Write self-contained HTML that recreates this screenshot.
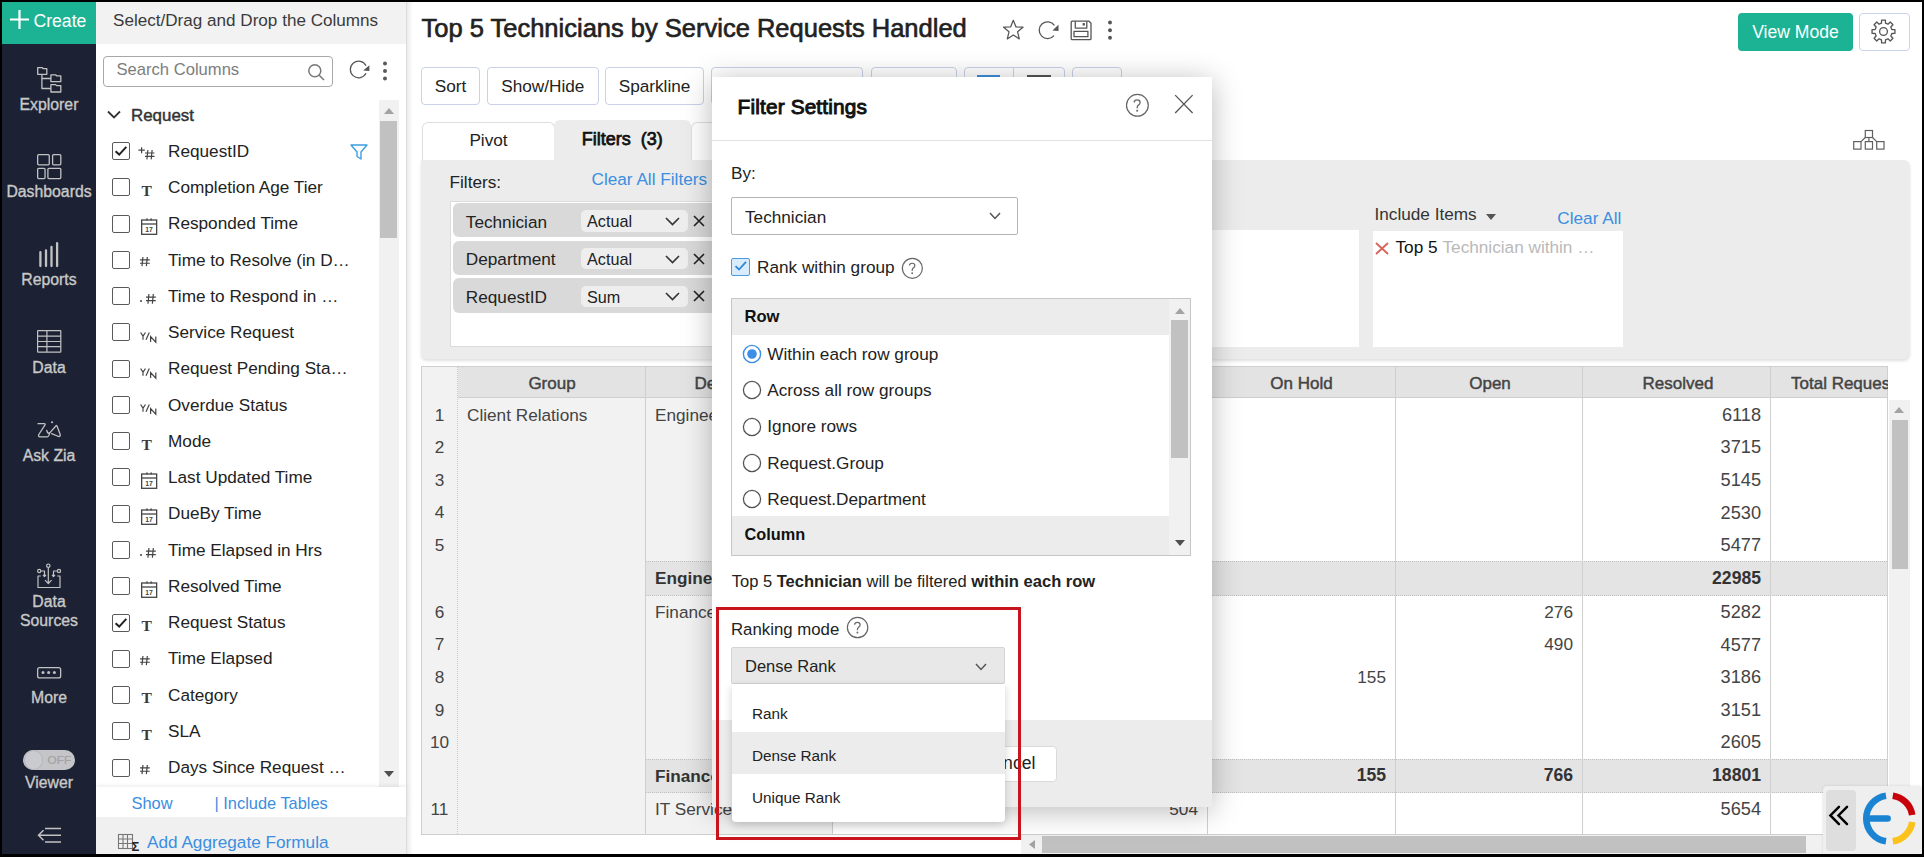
<!DOCTYPE html>
<html><head><meta charset="utf-8"><title>Filter Settings</title>
<style>
html,body{margin:0;padding:0;width:1924px;height:857px;overflow:hidden;background:#000;}
body{position:relative;font-family:'Liberation Sans', sans-serif;}
.t{position:absolute;line-height:1;white-space:nowrap;}
.r{position:absolute;box-sizing:border-box;}
svg.r{overflow:visible;}
</style></head><body>
<div class="r" style="left:2.0px;top:2.0px;width:1920.0px;height:852.0px;background:#fff;"></div>
<div class="r" style="left:2.0px;top:2.0px;width:94.0px;height:852.0px;background:#1c2133;"></div>
<div class="r" style="left:2.0px;top:2.0px;width:94.0px;height:42.0px;background:#1bb394;"></div>
<svg class="r" style="left:10px;top:10px;" width="19" height="19" viewBox="0 0 19 19"><path d="M9.5 0V19M0 9.5H19" stroke="#fff" stroke-width="2.2"/></svg>
<div class="t" style="left:33.5px;top:13.1px;font-size:17.6px;color:#fff;font-weight:400;">Create</div>
<svg class="r" style="left:37px;top:67px;" width="25" height="26" viewBox="0 0 25 26"><g fill="none" stroke="#c2c2c2" stroke-width="1.3" stroke-linejoin="round"><path d="M0.7 7.3V0.7H5.3L6.3 1.7H9.8V7.3Z"/><path d="M13.9 14.7V7.8H18.6L19.6 8.8H23.8V14.7Z"/><path d="M13.9 25V17.6H18.6L19.6 18.6H23.8V25Z"/><path d="M4.9 7.3V21.5H13.9M4.9 11.5H13.9"/></g></svg>
<div class="t" style="left:-251.0px;width:600px;text-align:center;top:96.6px;font-size:15.8px;color:#c9c9c9;font-weight:400;-webkit-text-stroke:0.35px #c9c9c9;">Explorer</div>
<svg class="r" style="left:37px;top:154px;" width="25" height="25" viewBox="0 0 25 25"><g fill="none" stroke="#c2c2c2" stroke-width="1.3"><rect x="0.65" y="0.65" width="11.6" height="10.2" rx="1"/><rect x="15.6" y="0.65" width="8.2" height="10.2" rx="1"/><rect x="0.65" y="14.3" width="7.4" height="10.3" rx="1"/><rect x="10.9" y="14.3" width="12.9" height="10.3" rx="1"/></g></svg>
<div class="t" style="left:-251.0px;width:600px;text-align:center;top:183.6px;font-size:15.8px;color:#c9c9c9;font-weight:400;-webkit-text-stroke:0.35px #c9c9c9;">Dashboards</div>
<svg class="r" style="left:37px;top:240px;" width="24" height="28" viewBox="0 0 24 28"><g stroke="#c2c2c2" stroke-width="2.3" stroke-linecap="round"><path d="M3.4 12.2V26M9 10.4V26M14.5 6.8V26M20.1 3.1V26"/></g></svg>
<div class="t" style="left:-251.0px;width:600px;text-align:center;top:272.1px;font-size:15.8px;color:#c9c9c9;font-weight:400;-webkit-text-stroke:0.35px #c9c9c9;">Reports</div>
<svg class="r" style="left:37px;top:330px;" width="25" height="23" viewBox="0 0 25 23"><g fill="none" stroke="#c2c2c2" stroke-width="1.2"><rect x="0.6" y="0.6" width="23.2" height="21.6" rx="0.5"/><path d="M0.6 6.1H23.8M0.6 11.5H23.8M0.6 16.6H23.8M9.9 0.6V22.2"/></g></svg>
<div class="t" style="left:-251.0px;width:600px;text-align:center;top:359.6px;font-size:15.8px;color:#c9c9c9;font-weight:400;-webkit-text-stroke:0.35px #c9c9c9;">Data</div>
<svg class="r" style="left:37px;top:421px;" width="25" height="18" viewBox="0 0 25 18"><g fill="none" stroke="#c2c2c2" stroke-width="1.3" stroke-linecap="round" stroke-linejoin="round"><path d="M1 2.7H7.3Q8.6 2.7 8 3.9L1.8 13.5Q1 15.5 2.6 15.8H10.3Q11.4 15.8 11.9 14.4L12.6 11.9"/><path d="M9.75 9.4Q10.3 12.5 12.3 12.4L19.1 4.7Q19.6 4.2 20 5L23.2 13.5Q23.6 15.6 21.6 15.5L14.6 12.7"/></g><circle cx="15.06" cy="1.26" r="1.1" fill="#c2c2c2"/></svg>
<div class="t" style="left:-251.0px;width:600px;text-align:center;top:447.6px;font-size:15.8px;color:#c9c9c9;font-weight:400;-webkit-text-stroke:0.35px #c9c9c9;">Ask Zia</div>
<svg class="r" style="left:37px;top:563px;" width="25" height="26" viewBox="0 0 25 26"><g fill="none" stroke="#c2c2c2" stroke-width="1.2" stroke-linejoin="round"><path d="M3.8 13H1V24.5H23V13H20.2"/><circle cx="11.3" cy="2.7" r="1.7"/><path d="M11.3 4.4V20.5M8 17.2L11.3 20.5L14.6 17.2"/><circle cx="2.2" cy="8" r="1.6"/><path d="M3.8 8H7.5V13.3M6 11.8L7.5 13.5L9 11.8"/><circle cx="22" cy="8" r="1.6"/><path d="M20.4 8H16.5V13.3M15 11.8L16.5 13.5L18 11.8"/></g></svg>
<div class="t" style="left:-251.0px;width:600px;text-align:center;top:593.8px;font-size:15.8px;color:#c9c9c9;font-weight:400;-webkit-text-stroke:0.35px #c9c9c9;">Data</div>
<div class="t" style="left:-251.0px;width:600px;text-align:center;top:612.8px;font-size:15.8px;color:#c9c9c9;font-weight:400;-webkit-text-stroke:0.35px #c9c9c9;">Sources</div>
<svg class="r" style="left:37px;top:667px;" width="25" height="12" viewBox="0 0 25 12"><g fill="none" stroke="#c2c2c2" stroke-width="1.3"><rect x="0.65" y="0.65" width="23" height="10.3" rx="2"/></g><g fill="#c2c2c2"><circle cx="6" cy="5.5" r="1.5"/><circle cx="11.6" cy="5.5" r="1.5"/><circle cx="17.4" cy="5.5" r="1.5"/></g></svg>
<div class="t" style="left:-251.0px;width:600px;text-align:center;top:690.1px;font-size:15.8px;color:#c9c9c9;font-weight:400;-webkit-text-stroke:0.35px #c9c9c9;">More</div>
<div class="r" style="left:23.0px;top:750.0px;width:52.0px;height:20.0px;background:#c5c5c9;border-radius:10px;"></div>
<div class="r" style="left:23.5px;top:750.3px;width:19.0px;height:19.4px;background:#cacbd0;border-radius:50%;border:1px solid #b8b8bc;"></div>
<div class="t" style="left:47.5px;top:755.0px;font-size:11.8px;color:#a2a2a2;font-weight:400;-webkit-text-stroke:0.2px #a2a2a2;">OFF</div>
<div class="t" style="left:-251.0px;width:600px;text-align:center;top:774.6px;font-size:15.8px;color:#c9c9c9;font-weight:400;-webkit-text-stroke:0.35px #c9c9c9;">Viewer</div>
<svg class="r" style="left:37px;top:827px;" width="25" height="17" viewBox="0 0 25 17"><g fill="none" stroke="#c2c2c2" stroke-width="1.5"><path d="M8 1.5H24M1.5 8.2H24M8 15H24M6.5 3.2L1.5 8.2L6.5 13.2"/></g></svg>
<div class="r" style="left:96.0px;top:2.0px;width:311.0px;height:42.0px;background:#f2f2f2;"></div>
<div class="t" style="left:113.0px;top:11.7px;font-size:17.1px;color:#3a3a3a;font-weight:400;">Select/Drag and Drop the Columns</div>
<div class="r" style="left:103.0px;top:56.0px;width:230.0px;height:31.0px;border:1px solid #a8a8a8;border-radius:4px;background:#fff;"></div>
<div class="t" style="left:116.5px;top:61.9px;font-size:16.6px;color:#7d7d7d;font-weight:400;">Search Columns</div>
<svg class="r" style="left:308px;top:64px;" width="17" height="17" viewBox="0 0 17 17"><g fill="none" stroke="#777" stroke-width="1.5"><circle cx="6.8" cy="6.8" r="6"/><path d="M11.2 11.2L16 16"/></g></svg>
<svg class="r" style="left:349px;top:61px;" width="22" height="20" viewBox="0 0 22 20"><path d="M17 4.6A8.3 8.3 0 1 0 17 12.3" fill="none" stroke="#555" stroke-width="1.25"/><path d="M20.4 4.3V10L14.2 9.5Z" fill="#555"/></svg>
<svg class="r" style="left:381px;top:59px;" width="8" height="24" viewBox="0 0 8 24"><g fill="#5a5a5a"><circle cx="4" cy="4.4" r="2"/><circle cx="4" cy="12" r="2"/><circle cx="4" cy="19.5" r="2"/></g></svg>
<svg class="r" style="left:107px;top:110px;" width="14" height="10" viewBox="0 0 14 10"><path d="M1 1.5L7 7.5L13 1.5" fill="none" stroke="#333" stroke-width="1.8"/></svg>
<div class="t" style="left:131.0px;top:108.2px;font-size:16.9px;color:#333;font-weight:400;-webkit-text-stroke:0.45px #333;">Request</div>
<div class="r" style="left:378.5px;top:100.0px;width:20.0px;height:686.5px;background:#f1f1f1;"></div>
<svg class="r" style="left:384px;top:108px;" width="10" height="6" viewBox="0 0 10 6"><path d="M0 6L5 0L10 6Z" fill="#a3a3a3"/></svg>
<div class="r" style="left:380.0px;top:121.0px;width:17.0px;height:117.0px;background:#c1c1c1;"></div>
<svg class="r" style="left:384px;top:771px;" width="10" height="6" viewBox="0 0 10 6"><path d="M0 0L5 6L10 0Z" fill="#505050"/></svg>
<div class="r" style="left:112.0px;top:142.2px;width:18.0px;height:18.0px;border:1.3px solid #5a5a5a;border-radius:2px;background:#fff;"></div>
<svg class="r" style="left:114px;top:145.2px;" width="14" height="12" viewBox="0 0 14 12"><path d="M1.6 6.2L5.2 9.6L12.3 1.8" fill="none" stroke="#222" stroke-width="2"/></svg>
<svg class="r" style="left:138px;top:146.7px;" width="8" height="8" viewBox="0 0 8 8"><path d="M0.4 3.2H6.8M3.6 0.2V6.2" fill="none" stroke="#444" stroke-width="1.2"/></svg>
<svg class="r" style="left:144.8px;top:150.2px;" width="9.5" height="9.4" viewBox="0 0 9.5 9.4"><path d="M2.85 0L1.90 9.4M7.12 0L6.17 9.4M0 3.01H9.5M0 6.39H9.5" fill="none" stroke="#444" stroke-width="1.2"/></svg>
<div class="t" style="left:168.0px;top:142.8px;font-size:17.2px;color:#222;font-weight:400;">RequestID</div>
<div class="r" style="left:112.0px;top:178.4px;width:18.0px;height:18.0px;border:1.3px solid #5a5a5a;border-radius:2px;background:#fff;"></div>
<div class="t" style="left:141.4px;top:182.9px;font-size:15.5px;color:#3a3a3a;font-weight:700;font-family:'Liberation Serif';">T</div>
<div class="t" style="left:168.0px;top:179.1px;font-size:17.2px;color:#222;font-weight:400;">Completion Age Tier</div>
<div class="r" style="left:112.0px;top:214.7px;width:18.0px;height:18.0px;border:1.3px solid #5a5a5a;border-radius:2px;background:#fff;"></div>
<svg class="r" style="left:141px;top:218.2px;" width="16" height="17" viewBox="0 0 16 17"><g fill="none" stroke="#444" stroke-width="1.3"><rect x="0.65" y="2" width="15" height="14.3"/><path d="M0.65 6H15.65"/></g><rect x="5.3" y="0.4" width="1.3" height="2" fill="#444"/><rect x="9.5" y="0.4" width="1.3" height="2" fill="#444"/><text x="8" y="13.7" font-size="6.8" font-weight="700" text-anchor="middle" fill="#444" font-family="Liberation Sans">17</text></svg>
<div class="t" style="left:168.0px;top:215.3px;font-size:17.2px;color:#222;font-weight:400;">Responded Time</div>
<div class="r" style="left:112.0px;top:250.9px;width:18.0px;height:18.0px;border:1.3px solid #5a5a5a;border-radius:2px;background:#fff;"></div>
<svg class="r" style="left:139.8px;top:256.9px;" width="9.8" height="9.2" viewBox="0 0 9.8 9.2"><path d="M2.94 0L1.96 9.2M7.35 0L6.37 9.2M0 2.94H9.8M0 6.26H9.8" fill="none" stroke="#444" stroke-width="1.2"/></svg>
<div class="t" style="left:168.0px;top:251.6px;font-size:17.2px;color:#222;font-weight:400;">Time to Resolve (in D…</div>
<div class="r" style="left:112.0px;top:287.2px;width:18.0px;height:18.0px;border:1.3px solid #5a5a5a;border-radius:2px;background:#fff;"></div>
<div class="r" style="left:140px;top:300.2px;width:2px;height:2px;background:#444;border-radius:50%;"></div>
<svg class="r" style="left:145.5px;top:294.0px;" width="9.8" height="9.7" viewBox="0 0 9.8 9.7"><path d="M2.94 0L1.96 9.7M7.35 0L6.37 9.7M0 3.10H9.8M0 6.60H9.8" fill="none" stroke="#444" stroke-width="1.2"/></svg>
<div class="t" style="left:168.0px;top:287.8px;font-size:17.2px;color:#222;font-weight:400;">Time to Respond in …</div>
<div class="r" style="left:112.0px;top:323.4px;width:18.0px;height:18.0px;border:1.3px solid #5a5a5a;border-radius:2px;background:#fff;"></div>
<svg class="r" style="left:140px;top:331.9px;" width="17" height="11" viewBox="0 0 17 11"><path d="M0.6 0.5L3 4.1L5.5 0.5M3 4.1V7.8M6 7.8L9.3 0.5M10.6 10.1V4.5L15.8 10.1V4.5" fill="none" stroke="#444" stroke-width="1.2"/></svg>
<div class="t" style="left:168.0px;top:324.1px;font-size:17.2px;color:#222;font-weight:400;">Service Request</div>
<div class="r" style="left:112.0px;top:359.7px;width:18.0px;height:18.0px;border:1.3px solid #5a5a5a;border-radius:2px;background:#fff;"></div>
<svg class="r" style="left:140px;top:368.2px;" width="17" height="11" viewBox="0 0 17 11"><path d="M0.6 0.5L3 4.1L5.5 0.5M3 4.1V7.8M6 7.8L9.3 0.5M10.6 10.1V4.5L15.8 10.1V4.5" fill="none" stroke="#444" stroke-width="1.2"/></svg>
<div class="t" style="left:168.0px;top:360.3px;font-size:17.2px;color:#222;font-weight:400;">Request Pending Sta…</div>
<div class="r" style="left:112.0px;top:395.9px;width:18.0px;height:18.0px;border:1.3px solid #5a5a5a;border-radius:2px;background:#fff;"></div>
<svg class="r" style="left:140px;top:404.4px;" width="17" height="11" viewBox="0 0 17 11"><path d="M0.6 0.5L3 4.1L5.5 0.5M3 4.1V7.8M6 7.8L9.3 0.5M10.6 10.1V4.5L15.8 10.1V4.5" fill="none" stroke="#444" stroke-width="1.2"/></svg>
<div class="t" style="left:168.0px;top:396.6px;font-size:17.2px;color:#222;font-weight:400;">Overdue Status</div>
<div class="r" style="left:112.0px;top:432.2px;width:18.0px;height:18.0px;border:1.3px solid #5a5a5a;border-radius:2px;background:#fff;"></div>
<div class="t" style="left:141.4px;top:436.7px;font-size:15.5px;color:#3a3a3a;font-weight:700;font-family:'Liberation Serif';">T</div>
<div class="t" style="left:168.0px;top:432.8px;font-size:17.2px;color:#222;font-weight:400;">Mode</div>
<div class="r" style="left:112.0px;top:468.4px;width:18.0px;height:18.0px;border:1.3px solid #5a5a5a;border-radius:2px;background:#fff;"></div>
<svg class="r" style="left:141px;top:471.9px;" width="16" height="17" viewBox="0 0 16 17"><g fill="none" stroke="#444" stroke-width="1.3"><rect x="0.65" y="2" width="15" height="14.3"/><path d="M0.65 6H15.65"/></g><rect x="5.3" y="0.4" width="1.3" height="2" fill="#444"/><rect x="9.5" y="0.4" width="1.3" height="2" fill="#444"/><text x="8" y="13.7" font-size="6.8" font-weight="700" text-anchor="middle" fill="#444" font-family="Liberation Sans">17</text></svg>
<div class="t" style="left:168.0px;top:469.1px;font-size:17.2px;color:#222;font-weight:400;">Last Updated Time</div>
<div class="r" style="left:112.0px;top:504.7px;width:18.0px;height:18.0px;border:1.3px solid #5a5a5a;border-radius:2px;background:#fff;"></div>
<svg class="r" style="left:141px;top:508.2px;" width="16" height="17" viewBox="0 0 16 17"><g fill="none" stroke="#444" stroke-width="1.3"><rect x="0.65" y="2" width="15" height="14.3"/><path d="M0.65 6H15.65"/></g><rect x="5.3" y="0.4" width="1.3" height="2" fill="#444"/><rect x="9.5" y="0.4" width="1.3" height="2" fill="#444"/><text x="8" y="13.7" font-size="6.8" font-weight="700" text-anchor="middle" fill="#444" font-family="Liberation Sans">17</text></svg>
<div class="t" style="left:168.0px;top:505.3px;font-size:17.2px;color:#222;font-weight:400;">DueBy Time</div>
<div class="r" style="left:112.0px;top:541.0px;width:18.0px;height:18.0px;border:1.3px solid #5a5a5a;border-radius:2px;background:#fff;"></div>
<div class="r" style="left:140px;top:554.0px;width:2px;height:2px;background:#444;border-radius:50%;"></div>
<svg class="r" style="left:145.5px;top:547.8px;" width="9.8" height="9.7" viewBox="0 0 9.8 9.7"><path d="M2.94 0L1.96 9.7M7.35 0L6.37 9.7M0 3.10H9.8M0 6.60H9.8" fill="none" stroke="#444" stroke-width="1.2"/></svg>
<div class="t" style="left:168.0px;top:541.6px;font-size:17.2px;color:#222;font-weight:400;">Time Elapsed in Hrs</div>
<div class="r" style="left:112.0px;top:577.2px;width:18.0px;height:18.0px;border:1.3px solid #5a5a5a;border-radius:2px;background:#fff;"></div>
<svg class="r" style="left:141px;top:580.7px;" width="16" height="17" viewBox="0 0 16 17"><g fill="none" stroke="#444" stroke-width="1.3"><rect x="0.65" y="2" width="15" height="14.3"/><path d="M0.65 6H15.65"/></g><rect x="5.3" y="0.4" width="1.3" height="2" fill="#444"/><rect x="9.5" y="0.4" width="1.3" height="2" fill="#444"/><text x="8" y="13.7" font-size="6.8" font-weight="700" text-anchor="middle" fill="#444" font-family="Liberation Sans">17</text></svg>
<div class="t" style="left:168.0px;top:577.8px;font-size:17.2px;color:#222;font-weight:400;">Resolved Time</div>
<div class="r" style="left:112.0px;top:613.5px;width:18.0px;height:18.0px;border:1.3px solid #5a5a5a;border-radius:2px;background:#fff;"></div>
<svg class="r" style="left:114px;top:616.5px;" width="14" height="12" viewBox="0 0 14 12"><path d="M1.6 6.2L5.2 9.6L12.3 1.8" fill="none" stroke="#222" stroke-width="2"/></svg>
<div class="t" style="left:141.4px;top:617.9px;font-size:15.5px;color:#3a3a3a;font-weight:700;font-family:'Liberation Serif';">T</div>
<div class="t" style="left:168.0px;top:614.1px;font-size:17.2px;color:#222;font-weight:400;">Request Status</div>
<div class="r" style="left:112.0px;top:649.7px;width:18.0px;height:18.0px;border:1.3px solid #5a5a5a;border-radius:2px;background:#fff;"></div>
<svg class="r" style="left:139.8px;top:655.7px;" width="9.8" height="9.2" viewBox="0 0 9.8 9.2"><path d="M2.94 0L1.96 9.2M7.35 0L6.37 9.2M0 2.94H9.8M0 6.26H9.8" fill="none" stroke="#444" stroke-width="1.2"/></svg>
<div class="t" style="left:168.0px;top:650.3px;font-size:17.2px;color:#222;font-weight:400;">Time Elapsed</div>
<div class="r" style="left:112.0px;top:686.0px;width:18.0px;height:18.0px;border:1.3px solid #5a5a5a;border-radius:2px;background:#fff;"></div>
<div class="t" style="left:141.4px;top:690.4px;font-size:15.5px;color:#3a3a3a;font-weight:700;font-family:'Liberation Serif';">T</div>
<div class="t" style="left:168.0px;top:686.6px;font-size:17.2px;color:#222;font-weight:400;">Category</div>
<div class="r" style="left:112.0px;top:722.2px;width:18.0px;height:18.0px;border:1.3px solid #5a5a5a;border-radius:2px;background:#fff;"></div>
<div class="t" style="left:141.4px;top:726.7px;font-size:15.5px;color:#3a3a3a;font-weight:700;font-family:'Liberation Serif';">T</div>
<div class="t" style="left:168.0px;top:722.8px;font-size:17.2px;color:#222;font-weight:400;">SLA</div>
<div class="r" style="left:112.0px;top:758.5px;width:18.0px;height:18.0px;border:1.3px solid #5a5a5a;border-radius:2px;background:#fff;"></div>
<svg class="r" style="left:139.8px;top:764.5px;" width="9.8" height="9.2" viewBox="0 0 9.8 9.2"><path d="M2.94 0L1.96 9.2M7.35 0L6.37 9.2M0 2.94H9.8M0 6.26H9.8" fill="none" stroke="#444" stroke-width="1.2"/></svg>
<div class="t" style="left:168.0px;top:759.1px;font-size:17.2px;color:#222;font-weight:400;">Days Since Request …</div>
<svg class="r" style="left:350px;top:144px;" width="18" height="16" viewBox="0 0 18 16"><path d="M1 1H17L11 8V15L7 12.5V8Z" fill="none" stroke="#3d9ee0" stroke-width="1.4" stroke-linejoin="round"/></svg>
<div class="r" style="left:96.0px;top:786.5px;width:311.0px;height:30.5px;background:#fff;box-shadow:0 -2px 3px rgba(0,0,0,0.06);"></div>
<div class="t" style="left:131.5px;top:795.1px;font-size:16.4px;color:#3b8ee0;font-weight:400;">Show</div>
<div class="t" style="left:214.5px;top:795.1px;font-size:16.4px;color:#3b8ee0;font-weight:400;">| Include Tables</div>
<div class="r" style="left:96.0px;top:817.0px;width:311.0px;height:37.0px;background:#f0f0f0;"></div>
<svg class="r" style="left:118px;top:834px;" width="24" height="18" viewBox="0 0 24 18"><g fill="none" stroke="#777" stroke-width="1.1"><rect x="0.5" y="0.5" width="14" height="14"/><path d="M0.5 5H14.5M0.5 9.5H14.5M5 0.5V14.5M9.5 0.5V14.5"/></g><text x="17.5" y="17" font-size="13" font-weight="700" fill="#222" text-anchor="middle" font-family="Liberation Sans">&#931;</text></svg>
<div class="t" style="left:147.0px;top:834.4px;font-size:17.2px;color:#3b8ee0;font-weight:400;">Add Aggregate Formula</div>
<div class="r" style="left:406.0px;top:2.0px;width:1.0px;height:852.0px;background:#dcdcdc;"></div>
<div class="r" style="left:407.0px;top:2.0px;width:6.0px;height:852.0px;background:linear-gradient(to right, rgba(0,0,0,0.08), rgba(0,0,0,0));"></div>
<div class="t" style="left:421.5px;top:16.0px;font-size:25.5px;color:#222;font-weight:400;-webkit-text-stroke:0.65px #222;">Top 5 Technicians by Service Requests Handled</div>
<svg class="r" style="left:1002px;top:19px;" width="23" height="22" viewBox="0 0 23 22"><path d="M11.3 1.3L14 7.9L21 8.2L15.6 12.8L17.3 19.9L11.3 16L5.3 19.9L7 12.8L1.6 8.2L8.6 7.9Z" fill="none" stroke="#555" stroke-width="1.25" stroke-linejoin="round"/></svg>
<svg class="r" style="left:1038px;top:20px;" width="22" height="21" viewBox="0 0 22 21"><path d="M16.48 5.38A8.4 8.4 0 1 0 16.03 15.6" fill="none" stroke="#555" stroke-width="1.3"/><path d="M20.5 4.8V10.9L14.4 10.6Z" fill="#555"/></svg>
<svg class="r" style="left:1070px;top:20px;" width="22" height="21" viewBox="0 0 22 21"><g fill="none" stroke="#555" stroke-width="1.3" stroke-linejoin="round"><path d="M2.2 1.2H19L21 3.2V18.7Q21 19.7 20 19.7H2.2Q1.2 19.7 1.2 18.7V2.2Q1.2 1.2 2.2 1.2Z"/><path d="M5.3 1.2V8.1H16.8V1.2"/><rect x="4" y="11.3" width="13.9" height="5.4"/></g><rect x="12.6" y="3.1" width="2.3" height="2.4" fill="#555"/></svg>
<svg class="r" style="left:1106px;top:18px;" width="8" height="24" viewBox="0 0 8 24"><g fill="#555"><circle cx="4" cy="4.5" r="1.95"/><circle cx="4" cy="12.2" r="1.95"/><circle cx="4" cy="19.8" r="1.95"/></g></svg>
<div class="r" style="left:1738.0px;top:13.0px;width:115.0px;height:38.0px;background:#1bb394;border-radius:4px;"></div>
<div class="t" style="left:1495.5px;width:600px;text-align:center;top:23.6px;font-size:17.6px;color:#fff;font-weight:400;">View Mode</div>
<div class="r" style="left:1859.0px;top:13.0px;width:51.0px;height:38.0px;border:1px solid #c8d2ea;border-radius:4px;background:#fff;"></div>
<svg class="r" style="left:1871.4px;top:19px;" width="25" height="25" viewBox="0 0 25 25"><g fill="none" stroke="#555" stroke-width="1.3" stroke-linejoin="round"><path d="M10.49 4.14L10.59 1.06L14.41 1.06L14.51 4.14L16.99 5.17L19.24 3.06L21.94 5.76L19.83 8.01L20.86 10.49L23.94 10.59L23.94 14.41L20.86 14.51L19.83 16.99L21.94 19.24L19.24 21.94L16.99 19.83L14.51 20.86L14.41 23.94L10.59 23.94L10.49 20.86L8.01 19.83L5.76 21.94L3.06 19.24L5.17 16.99L4.14 14.51L1.06 14.41L1.06 10.59L4.14 10.49L5.17 8.01L3.06 5.76L5.76 3.06L8.01 5.17Z"/><circle cx="12.5" cy="12.5" r="3.9"/></g></svg>
<div class="r" style="left:421.0px;top:67.0px;width:59.0px;height:38.3px;border:1px solid #c8d2e8;border-radius:4px;background:#fff;"></div>
<div class="t" style="left:150.5px;width:600px;text-align:center;top:78.4px;font-size:17.2px;color:#222;font-weight:400;">Sort</div>
<div class="r" style="left:487.0px;top:67.0px;width:111.5px;height:38.3px;border:1px solid #c8d2e8;border-radius:4px;background:#fff;"></div>
<div class="t" style="left:242.8px;width:600px;text-align:center;top:78.4px;font-size:17.2px;color:#222;font-weight:400;">Show/Hide</div>
<div class="r" style="left:605.0px;top:67.0px;width:99.0px;height:38.3px;border:1px solid #c8d2e8;border-radius:4px;background:#fff;"></div>
<div class="t" style="left:354.5px;width:600px;text-align:center;top:78.4px;font-size:17.2px;color:#222;font-weight:400;">Sparkline</div>
<div class="r" style="left:710.5px;top:67.0px;width:152.0px;height:38.3px;border:1px solid #c8d2e8;border-radius:4px;background:#fff;"></div>
<div class="r" style="left:870.5px;top:67.0px;width:86.5px;height:38.3px;border:1px solid #c8d2e8;border-radius:4px;background:#fff;"></div>
<div class="r" style="left:963.5px;top:67.0px;width:101.0px;height:38.3px;border:1px solid #c8d2e8;border-radius:4px;background:#fff;"></div>
<div class="r" style="left:1071.5px;top:67.0px;width:50.5px;height:38.3px;border:1px solid #c8d2e8;border-radius:4px;background:#fff;"></div>
<div class="r" style="left:1013.0px;top:67.0px;width:1.0px;height:38.3px;background:#c8d2e8;"></div>
<div class="r" style="left:977.0px;top:75.0px;width:23.0px;height:3.0px;background:#3d8ee0;"></div>
<div class="r" style="left:1027.0px;top:75.0px;width:24.0px;height:3.0px;background:#555;"></div>
<div class="r" style="left:421.5px;top:121.5px;width:133.5px;height:43.5px;background:#fff;border:1px solid #dedede;border-bottom:none;border-radius:6px 6px 0 0;"></div>
<div class="t" style="left:188.5px;width:600px;text-align:center;top:132.4px;font-size:17.2px;color:#222;font-weight:400;">Pivot</div>
<div class="r" style="left:554.0px;top:120.0px;width:137.0px;height:45.0px;background:#ececec;border-radius:6px 6px 0 0;"></div>
<div class="t" style="left:581.8px;top:130.0px;font-size:18px;color:#111;font-weight:400;-webkit-text-stroke:0.75px #111;">Filters&nbsp; (3)</div>
<div class="r" style="left:691.0px;top:121.5px;width:69.0px;height:43.5px;background:#fff;border:1px solid #dedede;border-bottom:none;border-radius:6px 6px 0 0;"></div>
<svg class="r" style="left:1853px;top:129px;" width="32" height="21" viewBox="0 0 32 21"><g fill="none" stroke="#5f5f5f" stroke-width="1.2"><rect x="12.3" y="1.5" width="7.2" height="7"/><rect x="0.7" y="12.6" width="7.3" height="7.5"/><rect x="12.3" y="12.6" width="7.2" height="7.5"/><rect x="23.7" y="12.6" width="7.3" height="7.5"/><path d="M12.3 8.5L8 12.6M15.9 8.5V12.6M19.5 8.5L23.7 12.6"/></g></svg>
<div class="r" style="left:421.0px;top:160.0px;width:1489.0px;height:199.0px;background:#ececec;border-radius:0 6px 6px 6px;box-shadow:0 2px 3px rgba(0,0,0,0.12);"></div>
<div class="t" style="left:449.5px;top:174.4px;font-size:17.2px;color:#222;font-weight:400;">Filters:</div>
<div class="t" style="left:591.5px;top:171.4px;font-size:17.2px;color:#3b8ee0;font-weight:400;">Clear All Filters</div>
<div class="r" style="left:450.0px;top:200.5px;width:550.0px;height:146.0px;background:#fff;border:1px solid #dcdcdc;"></div>
<div class="r" style="left:453.0px;top:203.0px;width:547.0px;height:34.3px;background:#d9d9d9;border-radius:6px;"></div>
<div class="t" style="left:465.8px;top:213.6px;font-size:17.2px;color:#222;font-weight:400;">Technician</div>
<div class="r" style="left:581.0px;top:210.2px;width:107.0px;height:21.6px;background:#eeeeee;border-radius:5px;"></div>
<div class="t" style="left:587.0px;top:213.3px;font-size:16.2px;color:#222;font-weight:400;">Actual</div>
<svg class="r" style="left:665px;top:217px;" width="15" height="9" viewBox="0 0 15 9"><path d="M1 1L7.5 7.5L14 1" fill="none" stroke="#333" stroke-width="1.6"/></svg>
<svg class="r" style="left:693px;top:215px;" width="12" height="12" viewBox="0 0 12 12"><path d="M1 1L11 11M11 1L1 11" fill="none" stroke="#222" stroke-width="1.6"/></svg>
<div class="r" style="left:453.0px;top:240.5px;width:547.0px;height:34.3px;background:#d9d9d9;border-radius:6px;"></div>
<div class="t" style="left:465.8px;top:251.1px;font-size:17.2px;color:#222;font-weight:400;">Department</div>
<div class="r" style="left:581.0px;top:247.7px;width:107.0px;height:21.6px;background:#eeeeee;border-radius:5px;"></div>
<div class="t" style="left:587.0px;top:250.8px;font-size:16.2px;color:#222;font-weight:400;">Actual</div>
<svg class="r" style="left:665px;top:254.5px;" width="15" height="9" viewBox="0 0 15 9"><path d="M1 1L7.5 7.5L14 1" fill="none" stroke="#333" stroke-width="1.6"/></svg>
<svg class="r" style="left:693px;top:252.5px;" width="12" height="12" viewBox="0 0 12 12"><path d="M1 1L11 11M11 1L1 11" fill="none" stroke="#222" stroke-width="1.6"/></svg>
<div class="r" style="left:453.0px;top:278.3px;width:547.0px;height:34.3px;background:#d9d9d9;border-radius:6px;"></div>
<div class="t" style="left:465.8px;top:288.9px;font-size:17.2px;color:#222;font-weight:400;">RequestID</div>
<div class="r" style="left:581.0px;top:285.5px;width:107.0px;height:21.6px;background:#eeeeee;border-radius:5px;"></div>
<div class="t" style="left:587.0px;top:288.6px;font-size:16.2px;color:#222;font-weight:400;">Sum</div>
<svg class="r" style="left:665px;top:292.3px;" width="15" height="9" viewBox="0 0 15 9"><path d="M1 1L7.5 7.5L14 1" fill="none" stroke="#333" stroke-width="1.6"/></svg>
<svg class="r" style="left:693px;top:290.3px;" width="12" height="12" viewBox="0 0 12 12"><path d="M1 1L11 11M11 1L1 11" fill="none" stroke="#222" stroke-width="1.6"/></svg>
<div class="r" style="left:1000.0px;top:229.5px;width:359.0px;height:117.5px;background:#fff;"></div>
<div class="t" style="left:1374.5px;top:206.4px;font-size:17.2px;color:#333;font-weight:400;">Include Items</div>
<svg class="r" style="left:1486px;top:213.5px;" width="10" height="6" viewBox="0 0 10 6"><path d="M0 0H10L5 6Z" fill="#555"/></svg>
<div class="t" style="left:1557.3px;top:210.4px;font-size:17.2px;color:#3b8ee0;font-weight:400;">Clear All</div>
<div class="r" style="left:1373.0px;top:231.0px;width:250.0px;height:116.0px;background:#fff;"></div>
<svg class="r" style="left:1375px;top:241.5px;" width="14" height="13" viewBox="0 0 14 13"><path d="M1 1L13 12M13 1L1 12" fill="none" stroke="#d9645e" stroke-width="1.9"/></svg>
<div class="t" style="left:1395.5px;top:239.4px;font-size:17.2px;color:#111;font-weight:400;">Top 5</div>
<div class="t" style="left:1442.5px;top:239.4px;font-size:17.2px;color:#b9b9b9;font-weight:400;">Technician within …</div>
<div class="r" style="left:421.0px;top:366.0px;width:1467.0px;height:469.2px;background:#fff;border:1px solid #cfcfcf;"></div>
<div class="r" style="left:422.0px;top:367.0px;width:223.5px;height:467.2px;background:#f2f2f2;"></div>
<div class="r" style="left:645.5px;top:367.0px;width:186.9px;height:467.2px;background:#f2f2f2;"></div>
<div class="r" style="left:457.6px;top:367.0px;width:1429.4px;height:31.4px;background:#e3e3e3;border-bottom:1px solid #cfcfcf;"></div>
<div class="r" style="left:645.5px;top:561.4px;width:1241.5px;height:34.2px;background:#e4e4e4;border-top:1px dotted #c2c2c2;border-bottom:1px dotted #c2c2c2;"></div>
<div class="r" style="left:645.5px;top:758.6px;width:1241.5px;height:34.2px;background:#e4e4e4;border-top:1px dotted #c2c2c2;border-bottom:1px dotted #c2c2c2;"></div>
<div class="r" style="left:457.2px;top:367.0px;width:1.0px;height:467.2px;border-left:1px dotted #c8c8c8;"></div>
<div class="r" style="left:645.0px;top:367.0px;width:1.0px;height:467.2px;background:#cfcfcf;"></div>
<div class="r" style="left:831.9px;top:367.0px;width:1.0px;height:467.2px;background:#cfcfcf;"></div>
<div class="r" style="left:1207.2px;top:367.0px;width:1.0px;height:467.2px;background:#cfcfcf;"></div>
<div class="r" style="left:1394.5px;top:367.0px;width:1.0px;height:467.2px;background:#cfcfcf;"></div>
<div class="r" style="left:1581.9px;top:367.0px;width:1.0px;height:467.2px;background:#cfcfcf;"></div>
<div class="r" style="left:1769.7px;top:367.0px;width:1.0px;height:467.2px;background:#cfcfcf;"></div>
<div class="t" style="left:252.0px;width:600px;text-align:center;top:374.6px;font-size:17.0px;color:#444;font-weight:400;-webkit-text-stroke:0.45px #444;">Group</div>
<div class="t" style="left:439.0px;width:600px;text-align:center;top:374.6px;font-size:17.0px;color:#444;font-weight:400;-webkit-text-stroke:0.45px #444;">Department</div>
<div class="t" style="left:1001.5px;width:600px;text-align:center;top:374.6px;font-size:17.0px;color:#444;font-weight:400;-webkit-text-stroke:0.45px #444;">On Hold</div>
<div class="t" style="left:1190.0px;width:600px;text-align:center;top:374.6px;font-size:17.0px;color:#444;font-weight:400;-webkit-text-stroke:0.45px #444;">Open</div>
<div class="t" style="left:1378.0px;width:600px;text-align:center;top:374.6px;font-size:17.0px;color:#444;font-weight:400;-webkit-text-stroke:0.45px #444;">Resolved</div>
<div class="t" style="left:1791px;top:374.6px;font-size:17px;color:#444;font-weight:400;-webkit-text-stroke:0.45px #444;width:97px;overflow:hidden;">Total Requests</div>
<div class="t" style="left:139.5px;width:600px;text-align:center;top:406.6px;font-size:17.2px;color:#444;font-weight:400;">1</div>
<div class="t" style="left:139.5px;width:600px;text-align:center;top:439.2px;font-size:17.2px;color:#444;font-weight:400;">2</div>
<div class="t" style="left:139.5px;width:600px;text-align:center;top:471.8px;font-size:17.2px;color:#444;font-weight:400;">3</div>
<div class="t" style="left:139.5px;width:600px;text-align:center;top:504.4px;font-size:17.2px;color:#444;font-weight:400;">4</div>
<div class="t" style="left:139.5px;width:600px;text-align:center;top:537.0px;font-size:17.2px;color:#444;font-weight:400;">5</div>
<div class="t" style="left:139.5px;width:600px;text-align:center;top:603.8px;font-size:17.2px;color:#444;font-weight:400;">6</div>
<div class="t" style="left:139.5px;width:600px;text-align:center;top:636.4px;font-size:17.2px;color:#444;font-weight:400;">7</div>
<div class="t" style="left:139.5px;width:600px;text-align:center;top:669.0px;font-size:17.2px;color:#444;font-weight:400;">8</div>
<div class="t" style="left:139.5px;width:600px;text-align:center;top:701.6px;font-size:17.2px;color:#444;font-weight:400;">9</div>
<div class="t" style="left:139.5px;width:600px;text-align:center;top:734.2px;font-size:17.2px;color:#444;font-weight:400;">10</div>
<div class="t" style="left:139.5px;width:600px;text-align:center;top:801.0px;font-size:17.2px;color:#444;font-weight:400;">11</div>
<div class="t" style="left:467.0px;top:406.6px;font-size:17.2px;color:#444;font-weight:400;">Client Relations</div>
<div class="t" style="left:655.0px;top:406.6px;font-size:17.2px;color:#444;font-weight:400;">Engineering</div>
<div class="t" style="left:655.0px;top:570.4px;font-size:17.2px;color:#333;font-weight:700;">Engineering</div>
<div class="t" style="left:655.0px;top:603.8px;font-size:17.2px;color:#444;font-weight:400;">Finance</div>
<div class="t" style="left:655.0px;top:767.6px;font-size:17.2px;color:#333;font-weight:700;">Finance</div>
<div class="t" style="left:655.0px;top:801.0px;font-size:17.2px;color:#444;font-weight:400;">IT Services</div>
<div class="t" style="left:1161.0px;width:600px;text-align:right;top:405.8px;font-size:18.2px;color:#444;font-weight:400;">6118</div>
<div class="t" style="left:1161.0px;width:600px;text-align:right;top:438.4px;font-size:18.2px;color:#444;font-weight:400;">3715</div>
<div class="t" style="left:1161.0px;width:600px;text-align:right;top:471.0px;font-size:18.2px;color:#444;font-weight:400;">5145</div>
<div class="t" style="left:1161.0px;width:600px;text-align:right;top:503.6px;font-size:18.2px;color:#444;font-weight:400;">2530</div>
<div class="t" style="left:1161.0px;width:600px;text-align:right;top:536.2px;font-size:18.2px;color:#444;font-weight:400;">5477</div>
<div class="t" style="left:1161.0px;width:600px;text-align:right;top:603.0px;font-size:18.2px;color:#444;font-weight:400;">5282</div>
<div class="t" style="left:1161.0px;width:600px;text-align:right;top:635.6px;font-size:18.2px;color:#444;font-weight:400;">4577</div>
<div class="t" style="left:1161.0px;width:600px;text-align:right;top:668.2px;font-size:18.2px;color:#444;font-weight:400;">3186</div>
<div class="t" style="left:1161.0px;width:600px;text-align:right;top:700.8px;font-size:18.2px;color:#444;font-weight:400;">3151</div>
<div class="t" style="left:1161.0px;width:600px;text-align:right;top:733.4px;font-size:18.2px;color:#444;font-weight:400;">2605</div>
<div class="t" style="left:1161.0px;width:600px;text-align:right;top:800.2px;font-size:18.2px;color:#444;font-weight:400;">5654</div>
<div class="t" style="left:1161.0px;width:600px;text-align:right;top:570.1px;font-size:17.6px;color:#333;font-weight:700;">22985</div>
<div class="t" style="left:1161.0px;width:600px;text-align:right;top:767.3px;font-size:17.6px;color:#333;font-weight:700;">18801</div>
<div class="t" style="left:973.0px;width:600px;text-align:right;top:767.3px;font-size:17.6px;color:#333;font-weight:700;">766</div>
<div class="t" style="left:786.0px;width:600px;text-align:right;top:767.3px;font-size:17.6px;color:#333;font-weight:700;">155</div>
<div class="t" style="left:973.0px;width:600px;text-align:right;top:603.8px;font-size:17.2px;color:#444;font-weight:400;">276</div>
<div class="t" style="left:973.0px;width:600px;text-align:right;top:636.4px;font-size:17.2px;color:#444;font-weight:400;">490</div>
<div class="t" style="left:786.0px;width:600px;text-align:right;top:669.0px;font-size:17.2px;color:#444;font-weight:400;">155</div>
<div class="t" style="left:598.0px;width:600px;text-align:right;top:801.0px;font-size:17.2px;color:#444;font-weight:400;">504</div>
<div class="r" style="left:1888.5px;top:399.5px;width:21.0px;height:435.7px;background:#f1f1f1;"></div>
<svg class="r" style="left:1894px;top:407px;" width="10" height="6" viewBox="0 0 10 6"><path d="M0 6L5 0L10 6Z" fill="#a3a3a3"/></svg>
<div class="r" style="left:1891.5px;top:420.0px;width:16.0px;height:149.0px;background:#c1c1c1;"></div>
<div class="r" style="left:1021.0px;top:835.2px;width:867.5px;height:18.6px;background:#f1f1f1;"></div>
<svg class="r" style="left:1028.5px;top:840px;" width="6" height="9" viewBox="0 0 6 9"><path d="M6 0L0 4.5L6 9Z" fill="#a3a3a3"/></svg>
<div class="r" style="left:1042.0px;top:836.3px;width:764.0px;height:16.4px;background:#c1c1c1;"></div>
<div class="r" style="left:712.0px;top:77.0px;width:500.0px;height:730.0px;background:#fff;box-shadow:0 4px 28px rgba(0,0,0,0.28);"></div>
<div class="t" style="left:737.6px;top:96.9px;font-size:20.8px;color:#111;font-weight:400;-webkit-text-stroke:0.95px #111;letter-spacing:0.15px;">Filter Settings</div>
<svg class="r" style="left:1125.0px;top:93.0px;" width="25" height="25" viewBox="0 0 25 25"><g transform="scale(1.000)"><circle cx="12.4" cy="12.3" r="10.9" fill="none" stroke="#666" stroke-width="1.20"/><path d="M9.2 9.4Q9.2 6.8 12.2 6.8Q15.1 6.8 15.1 9.4Q15.1 11.1 13.4 12.1Q12.2 12.9 12.2 14.4V15.3" fill="none" stroke="#666" stroke-width="1.3"/><rect x="11.3" y="16.8" width="1.8" height="1.8" fill="#666"/></g></svg>
<svg class="r" style="left:1174px;top:94px;" width="21" height="21" viewBox="0 0 21 21"><path d="M1.2 1.1L18.6 19M18.6 1.1L1.2 19" fill="none" stroke="#555" stroke-width="1.3"/></svg>
<div class="r" style="left:712.0px;top:139.5px;width:500.0px;height:1.5px;background:#e2e2e2;"></div>
<div class="t" style="left:731.0px;top:164.7px;font-size:17.2px;color:#222;font-weight:400;">By:</div>
<div class="r" style="left:731.0px;top:197.0px;width:286.5px;height:38.0px;border:1px solid #b5b5b5;border-radius:2px;background:#fff;"></div>
<div class="t" style="left:745.0px;top:208.9px;font-size:17.2px;color:#222;font-weight:400;">Technician</div>
<svg class="r" style="left:989px;top:212px;" width="12" height="8" viewBox="0 0 12 8"><path d="M1 1L6 6.5L11 1" fill="none" stroke="#555" stroke-width="1.5"/></svg>
<div class="r" style="left:731.0px;top:257.5px;width:19.0px;height:18.0px;border:1px solid #4a9be6;border-radius:2px;background:#d9ecfb;"></div>
<svg class="r" style="left:733.5px;top:260.3px;" width="14" height="12" viewBox="0 0 14 12"><path d="M1.5 6.2L5 9.5L12 1.8" fill="none" stroke="#2f86d8" stroke-width="1.8"/></svg>
<div class="t" style="left:757.0px;top:259.0px;font-size:17.2px;color:#222;font-weight:400;">Rank within group</div>
<svg class="r" style="left:900.6px;top:256.7px;" width="25" height="25" viewBox="0 0 25 25"><g transform="scale(0.917)"><circle cx="12.4" cy="12.3" r="10.9" fill="none" stroke="#666" stroke-width="1.31"/><path d="M9.2 9.4Q9.2 6.8 12.2 6.8Q15.1 6.8 15.1 9.4Q15.1 11.1 13.4 12.1Q12.2 12.9 12.2 14.4V15.3" fill="none" stroke="#666" stroke-width="1.3"/><rect x="11.3" y="16.8" width="1.8" height="1.8" fill="#666"/></g></svg>
<div class="r" style="left:731.0px;top:298.0px;width:460.0px;height:258.0px;border:1px solid #c6c6c6;background:#fff;"></div>
<div class="r" style="left:732.0px;top:299.0px;width:437.0px;height:36.0px;background:#ececec;"></div>
<div class="t" style="left:744.5px;top:309.2px;font-size:16.6px;color:#111;font-weight:700;">Row</div>
<div class="r" style="left:732.0px;top:516.0px;width:437.0px;height:39.0px;background:#ececec;"></div>
<div class="t" style="left:744.5px;top:525.5px;font-size:16.3px;color:#111;font-weight:700;">Column</div>
<svg class="r" style="left:742px;top:344px;top:344.3px;" width="20" height="20" viewBox="0 0 20 20"><circle cx="10" cy="10" r="8.6" fill="#fff" stroke="#3d8ee6" stroke-width="1.4"/><circle cx="10" cy="10" r="4.8" fill="#3d8ee6"/></svg>
<div class="t" style="left:767.3px;top:346.2px;font-size:17.2px;color:#222;font-weight:400;">Within each row group</div>
<svg class="r" style="left:742px;top:380px;top:380.4px;" width="20" height="20" viewBox="0 0 20 20"><circle cx="10" cy="10" r="8.6" fill="#fff" stroke="#555" stroke-width="1.3"/></svg>
<div class="t" style="left:767.3px;top:382.3px;font-size:17.2px;color:#222;font-weight:400;">Across all row groups</div>
<svg class="r" style="left:742px;top:416px;top:416.5px;" width="20" height="20" viewBox="0 0 20 20"><circle cx="10" cy="10" r="8.6" fill="#fff" stroke="#555" stroke-width="1.3"/></svg>
<div class="t" style="left:767.3px;top:418.4px;font-size:17.2px;color:#222;font-weight:400;">Ignore rows</div>
<svg class="r" style="left:742px;top:452px;top:452.6px;" width="20" height="20" viewBox="0 0 20 20"><circle cx="10" cy="10" r="8.6" fill="#fff" stroke="#555" stroke-width="1.3"/></svg>
<div class="t" style="left:767.3px;top:454.5px;font-size:17.2px;color:#222;font-weight:400;">Request.Group</div>
<svg class="r" style="left:742px;top:488px;top:488.7px;" width="20" height="20" viewBox="0 0 20 20"><circle cx="10" cy="10" r="8.6" fill="#fff" stroke="#555" stroke-width="1.3"/></svg>
<div class="t" style="left:767.3px;top:490.6px;font-size:17.2px;color:#222;font-weight:400;">Request.Department</div>
<div class="r" style="left:1169.0px;top:299.0px;width:21.0px;height:256.0px;background:#f1f1f1;"></div>
<svg class="r" style="left:1175px;top:308px;" width="10" height="6" viewBox="0 0 10 6"><path d="M0 6L5 0L10 6Z" fill="#a3a3a3"/></svg>
<div class="r" style="left:1171.0px;top:320.0px;width:17.0px;height:137.5px;background:#c1c1c1;"></div>
<svg class="r" style="left:1175px;top:540px;" width="10" height="6" viewBox="0 0 10 6"><path d="M0 0L5 6L10 0Z" fill="#505050"/></svg>
<div class="t" style="left:731.7px;top:573.8px;font-size:16.55px;color:#222;font-weight:400;">Top 5 <b>Technician</b> will be filtered <b>within each row</b></div>
<div class="t" style="left:731.0px;top:621.8px;font-size:16.8px;color:#222;font-weight:400;">Ranking mode</div>
<svg class="r" style="left:845.6px;top:616.3px;" width="25" height="25" viewBox="0 0 25 25"><g transform="scale(0.936)"><circle cx="12.4" cy="12.3" r="10.9" fill="none" stroke="#666" stroke-width="1.28"/><path d="M9.2 9.4Q9.2 6.8 12.2 6.8Q15.1 6.8 15.1 9.4Q15.1 11.1 13.4 12.1Q12.2 12.9 12.2 14.4V15.3" fill="none" stroke="#666" stroke-width="1.3"/><rect x="11.3" y="16.8" width="1.8" height="1.8" fill="#666"/></g></svg>
<div class="r" style="left:731.0px;top:647.0px;width:274.0px;height:37.0px;background:#e8e8e8;border:1px solid #d4d4d4;border-radius:2px;"></div>
<div class="t" style="left:745.0px;top:657.8px;font-size:16.5px;color:#222;font-weight:400;">Dense Rank</div>
<svg class="r" style="left:975px;top:663px;" width="12" height="8" viewBox="0 0 12 8"><path d="M1 1L6 6.5L11 1" fill="none" stroke="#555" stroke-width="1.5"/></svg>
<div class="r" style="left:712.0px;top:720.0px;width:500.0px;height:87.0px;background:#ececec;"></div>
<div class="r" style="left:900.0px;top:746.0px;width:156.5px;height:35.5px;background:#fff;border:1px solid #dadada;border-radius:4px;"></div>
<div class="t" style="left:708.0px;width:600px;text-align:center;top:755.1px;font-size:17.6px;color:#222;font-weight:400;">Cancel</div>
<div class="r" style="left:732.0px;top:683.5px;width:272.5px;height:138.0px;background:#fff;border-radius:0 0 4px 4px;box-shadow:0 3px 8px rgba(0,0,0,0.18);"></div>
<div class="r" style="left:732.0px;top:731.7px;width:272.5px;height:42.1px;background:#ececec;"></div>
<div class="t" style="left:752.0px;top:706.3px;font-size:15.3px;color:#222;font-weight:400;">Rank</div>
<div class="t" style="left:752.0px;top:748.3px;font-size:15.3px;color:#222;font-weight:400;">Dense Rank</div>
<div class="t" style="left:752.0px;top:790.0px;font-size:15.3px;color:#222;font-weight:400;">Unique Rank</div>
<div class="r" style="left:716.0px;top:607.0px;width:305.0px;height:232.5px;border:3px solid #c8141c;"></div>
<div class="r" style="left:1822.5px;top:786.0px;width:99.5px;height:68.0px;background:#efefef;border-radius:4px 4px 0 0;box-shadow:0 0 3px rgba(0,0,0,0.12);"></div>
<div class="r" style="left:1826.0px;top:790.0px;width:29.5px;height:60.5px;background:#dedede;border-radius:4px;"></div>
<svg class="r" style="left:1828px;top:805px;" width="22" height="22" viewBox="0 0 22 22"><g fill="none" stroke="#000" stroke-width="2.6" stroke-linecap="round"><path d="M11 1.5L2 10.5L11 19.5M19.5 1.5L10.5 10.5L19.5 19.5" transform="translate(0.5,0.5) scale(0.95)"/></g></svg>
<svg class="r" style="left:1862px;top:791px;" width="56" height="56" viewBox="0 0 56 56"><g fill="none" stroke-width="6.6"><path d="M23.99 4.65A23.1 23.1 0 0 0 23.99 50.35" stroke="#1a84d2"/><path d="M8.7 27.5H25.6" stroke="#1a84d2" stroke-linecap="round"/><path d="M30.81 4.65A23.1 23.1 0 0 1 50.23 24.01" stroke="#c8000a"/><path d="M50.23 30.99A23.1 23.1 0 0 1 30.81 50.35" stroke="#fbc21b"/></g></svg>
</body></html>
